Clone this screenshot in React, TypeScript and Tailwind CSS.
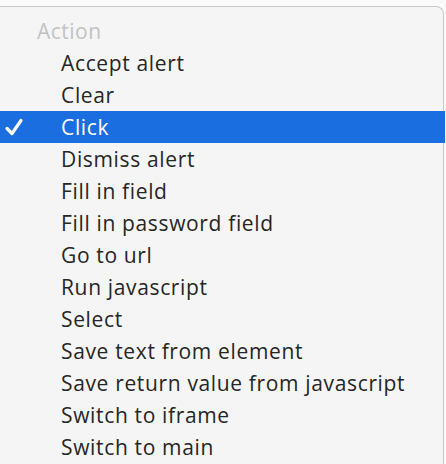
const items = [
  "Accept alert",
  "Clear",
  "Click",
  "Dismiss alert",
  "Fill in field",
  "Fill in password field",
  "Go to url",
  "Run javascript",
  "Select",
  "Save text from element",
  "Save return value from javascript",
  "Switch to iframe",
  "Switch to main",
];

const selected = "Click";

function Check() {
  return (
    <svg width="20" height="18" viewBox="0 0 20 18" className="shrink-0">
      <path
        d="M3 10.5 L8 15.5 L17 2.5"
        fill="none"
        stroke="white"
        strokeWidth="3.2"
        strokeLinecap="round"
        strokeLinejoin="round"
      />
    </svg>
  );
}

export default function App() {
  return (
    <div
      className="w-[446px] h-[464px] overflow-hidden bg-[#fafafa] pt-[6px]"
      style={{ fontFamily: '"Open Sans", "Liberation Sans", sans-serif' }}
    >
      <div className="h-full bg-[#f5f5f5] border-t border-r border-[#c9c9c9] rounded-tr-[8px] mr-[2px] pt-[8px]">
        <div className="h-8 flex items-center pl-[37px] pt-[2px] text-[21px] tracking-[0.5px] text-[#c2c2c2]">
          Action
        </div>
        {items.map((item) => {
          const on = item === selected;
          return (
            <div
              key={item}
              className={
                on
                  ? "h-8 flex items-center bg-[#1a6ee0] text-white text-[21px] tracking-[0.65px] -mr-[2px]"
                  : "h-8 flex items-center text-[#262626] text-[21px] tracking-[0.65px]"
              }
            >
              <div className="w-[61px] pl-[4px] flex items-center">
                {on && <Check />}
              </div>
              <span className="pt-[2px]">{item}</span>
            </div>
          );
        })}
      </div>
    </div>
  );
}
